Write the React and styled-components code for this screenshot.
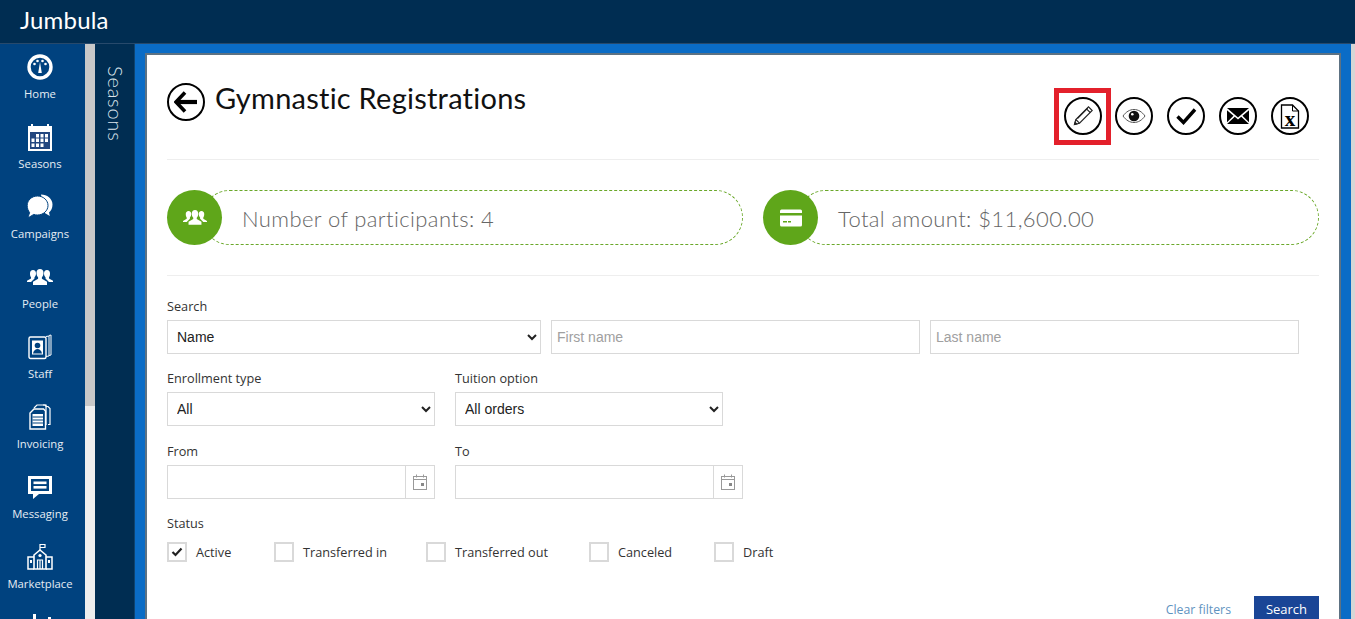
import React from "react";
import styled, { createGlobalStyle } from "styled-components";

const GlobalStyle = createGlobalStyle`
  html, body {
    margin: 0;
    padding: 0;
    height: 100%;
    overflow: hidden;
    background: #fff;
  }
  * {
    box-sizing: border-box;
  }
`;

const HomeIcon = () => (
  <svg width="28" height="28" viewBox="0 0 28 28">
    <circle cx="14" cy="14" r="11" fill="none" stroke="#fff" strokeWidth="3.4" />
    <circle cx="8.5" cy="11" r="1.3" fill="#fff" />
    <circle cx="11.5" cy="8" r="1.3" fill="#fff" />
    <circle cx="16.5" cy="8" r="1.3" fill="#fff" />
    <circle cx="19.5" cy="11" r="1.3" fill="#fff" />
    <path d="M14 9l1.8 11h-3.6z" fill="#fff" />
  </svg>
);

const SeasonsIcon = () => (
  <svg width="24" height="28" viewBox="0 0 24 28">
    <path d="M0 3h3V1h2v2h14V1h2v2h3v25H0z" fill="#fff" />
    <rect x="2" y="9" width="20" height="17" fill="#23477f" />
    <g fill="#fff">
      <rect x="8" y="11" width="3" height="3.500" />
      <rect x="12.500" y="11" width="3" height="3.500" />
      <rect x="17" y="11" width="3" height="3.500" />
      <rect x="3.500" y="15.500" width="3" height="3.500" />
      <rect x="8" y="15.500" width="3" height="3.500" />
      <rect x="12.500" y="15.500" width="3" height="3.500" />
      <rect x="17" y="15.500" width="3" height="3.500" />
      <rect x="3.500" y="20.500" width="3" height="3.500" />
      <rect x="8" y="20.500" width="3" height="3.500" />
      <rect x="12.500" y="20.500" width="3" height="3.500" />
    </g>
  </svg>
);

const CampaignsIcon = () => (
  <svg width="26" height="26" viewBox="0 0 26 26">
    <path d="M14 .5c6 0 11.500 4 11.500 10 0 3.500-1.300 6.200-3.500 8l.8 3.500-5-3z" fill="#fff" />
    <path
      d="M10.500 2c5.800 0 10.500 4.300 10.500 9.500S16.300 21 10.500 21c-1.300 0-2.600-.2-3.700-.6L.8 24l1.800-5.400C1.200 16.800.2 14.300.2 11.500.2 6.300 4.700 2 10.500 2z"
      fill="#fff"
      stroke="#00427f"
      strokeWidth="1"
    />
  </svg>
);

const PeopleIcon = ({ size = 26, color = "#fff" }) => (
  <svg width={size} height={size * 0.62} viewBox="0 0 26 16" fill={color}>
    <path d="M6 1c1.900 0 3 1.400 3 3.400 0 1.600-.7 3-1.500 3.800v1.300L4 13H0v-1.200l4-2.300V8.200C3.300 7.400 3 6 3 4.400 3 2.400 4.100 1 6 1z" />
    <path d="M20 1c1.900 0 3 1.400 3 3.400 0 1.600-.3 3-1 3.800v1.300l4 2.300V13h-4l-3.500-3.500V8.200C17.700 7.400 17 6 17 4.400 17 2.400 18.100 1 20 1z" />
    <path d="M13 0c2.200 0 3.500 1.600 3.500 3.900 0 1.900-.7 3.500-1.600 4.400v1.500l5.100 3V16H6v-3.200l5.100-3V8.300c-.9-.9-1.600-2.500-1.600-4.400C9.500 1.600 10.800 0 13 0z" />
  </svg>
);

const StaffIcon = () => (
  <svg width="24" height="26" viewBox="0 0 24 26">
    <path d="M18 2.500l3-.5v20l-3 .5M21 1.500l2-.5v20l-2 .5" fill="none" stroke="#fff" strokeWidth="1" />
    <rect x="1" y="3" width="17" height="21.500" rx="1.500" fill="#00427f" stroke="#fff" strokeWidth="1.400" />
    <rect x="4" y="6.500" width="11" height="14" fill="#fff" />
    <circle cx="9.500" cy="11.500" r="2.800" fill="#00427f" />
    <path d="M5 19.500c.5-3 2.500-4.500 4.500-4.500s4 1.500 4.500 4.500z" fill="#00427f" />
  </svg>
);

const InvoicingIcon = () => (
  <svg width="22" height="26" viewBox="0 0 22 26">
    <path d="M17 2.500h2l2 2v16h-2M14 1h2l2 2" fill="none" stroke="#fff" strokeWidth="1.200" />
    <path d="M5 4l3-3h9v20" fill="none" stroke="#fff" strokeWidth="1.200" />
    <path d="M5 5h9.500l2 2v18H1V9z" fill="#00427f" stroke="#fff" strokeWidth="1.400" />
    <rect x="3.500" y="10" width="10.500" height="12" fill="#fff" />
    <g fill="#00427f">
      <rect x="3.500" y="12.500" width="10.500" height="1" />
      <rect x="3.500" y="15.500" width="10.500" height="1" />
      <rect x="3.500" y="18.500" width="10.500" height="1" />
    </g>
  </svg>
);

const MessagingIcon = () => (
  <svg width="26" height="25" viewBox="0 0 26 25">
    <path d="M1 1h24v18H12l-6 5v-5H1z" fill="#fff" />
    <rect x="4" y="4" width="18" height="12" fill="#00427f" />
    <rect x="6.500" y="6.500" width="13" height="2.600" fill="#fff" />
    <rect x="6.500" y="11" width="13" height="2.600" fill="#fff" />
  </svg>
);

const MarketplaceIcon = () => (
  <svg width="26" height="26" viewBox="0 0 26 26">
    <path d="M13 0v6M13 .5h5v3h-5" fill="none" stroke="#fff" strokeWidth="1.200" />
    <path d="M13 6l6 5v14H7V11z" fill="none" stroke="#fff" strokeWidth="1.600" />
    <circle cx="13" cy="11.500" r="1.600" fill="#fff" />
    <path d="M10.500 25v-9h5v9M13 16v9" fill="none" stroke="#fff" strokeWidth="1.200" />
    <path d="M7 13H1v12h6M19 13h6v12h-6" fill="none" stroke="#fff" strokeWidth="1.500" />
    <path d="M3 16h2v3H3zM21 16h2v3h-2z" fill="#fff" />
  </svg>
);

const ReportsIcon = () => (
  <svg width="26" height="26" viewBox="0 0 26 26" fill="#fff">
    <rect x="6" y="0" width="3" height="26" />
    <rect x="21" y="3" width="3" height="23" />
  </svg>
);

const BackIcon = () => (
  <svg width="24" height="22" viewBox="0 0 24 22">
    <path d="M11 1.500L2 11l9 9.500" fill="none" stroke="#000" strokeWidth="3.600" />
    <path d="M3 11h20" stroke="#000" strokeWidth="4.200" />
  </svg>
);

const PencilIcon = () => (
  <svg width="24" height="24" viewBox="0 0 24 24" fill="none" stroke="#222" strokeWidth="1.100">
    <path d="M3.500 20.500l1.300-5L17.500 2.800l3.700 3.700L8.500 19.200z" />
    <path d="M4.800 15.500l3.700 3.700M15.500 4.800l3.700 3.700M6.500 14.500L16.800 4.200" />
    <path d="M3.500 20.500l.6-2.300 1.700 1.700z" fill="#222" />
  </svg>
);

const EyeIcon = () => (
  <svg width="24" height="16" viewBox="0 0 24 16">
    <path d="M1 8c3-4.200 6.800-6.500 11-6.500S20 3.800 23 8c-3 4.200-6.800 6.500-11 6.500S4 12.200 1 8z" fill="none" stroke="#555" strokeWidth="1" />
    <circle cx="12" cy="8" r="5.300" fill="#111" />
    <circle cx="10.300" cy="6.300" r="1.300" fill="#fff" />
  </svg>
);

const CheckIcon = () => (
  <svg width="22" height="18" viewBox="0 0 22 18">
    <path d="M2.500 9.500l6 6L20 2.500" fill="none" stroke="#000" strokeWidth="3.400" />
  </svg>
);

const MailIcon = () => (
  <svg width="24" height="18" viewBox="0 0 24 18">
    <path d="M1 1h22L12 10.500z" fill="#000" />
    <path d="M1 3.200v12l6.500-6.500zM23 3.200v12l-6.500-6.500z" fill="#000" />
    <path d="M1 17l7.800-7.300L12 12.500l3.200-2.800L23 17z" fill="#000" />
  </svg>
);

const ExcelIcon = () => (
  <svg width="20" height="25" viewBox="0 0 20 25">
    <path d="M1.500 1h11l6 6v17h-17z" fill="#fff" stroke="#000" strokeWidth="1.300" />
    <path d="M12.500 1v6h6" fill="none" stroke="#000" strokeWidth="1" />
    <text x="10" y="21.500" textAnchor="middle" fontFamily="Liberation Serif, serif" fontWeight="700" fontSize="21" fill="#000">x</text>
  </svg>
);

const CardIcon = () => (
  <svg width="24" height="20" viewBox="0 0 24 20">
    <rect x="1" y="1.500" width="22" height="17" rx="1.500" fill="#fff" />
    <rect x="1" y="5" width="22" height="2.500" fill="#5fa61a" />
    <rect x="3" y="10" width="18" height="6.500" fill="#fff" />
    <rect x="4" y="13" width="4" height="1.500" fill="#5fa61a" />
    <rect x="9" y="13" width="3" height="1.500" fill="#5fa61a" />
  </svg>
);

const CalendarIcon = () => (
  <svg width="14" height="16" viewBox="0 0 14 16" fill="none" stroke="#999" strokeWidth="1">
    <rect x=".5" y="2.500" width="13" height="13" />
    <path d="M.5 5.500h13M3.500 .5v3M10.500 .5v3" />
    <rect x="8" y="9" width="3" height="3" fill="#888" stroke="none" />
  </svg>
);

const navItems = [
  { label: "Home", Icon: HomeIcon },
  { label: "Seasons", Icon: SeasonsIcon },
  { label: "Campaigns", Icon: CampaignsIcon },
  { label: "People", Icon: PeopleIcon },
  { label: "Staff", Icon: StaffIcon },
  { label: "Invoicing", Icon: InvoicingIcon },
  { label: "Messaging", Icon: MessagingIcon },
  { label: "Marketplace", Icon: MarketplaceIcon },
  { label: "", Icon: ReportsIcon },
];

const statuses = [
  { label: "Active", width: 107, checked: true },
  { label: "Transferred in", width: 152 },
  { label: "Transferred out", width: 163 },
  { label: "Canceled", width: 125 },
  { label: "Draft", width: 70 },
];

export default function App() {
  return (
    <Page>
      <GlobalStyle />
      <TopBar>
        <Logo>Jumbula</Logo>
      </TopBar>
      <Body>
        <Sidebar>
          {navItems.map(({ label, Icon }, i) => (
            <NavItem key={i}>
              <NavIcon>
                <Icon />
              </NavIcon>
              <NavLabel>{label}</NavLabel>
            </NavItem>
          ))}
        </Sidebar>
        <SideScroll>
          <SideThumb />
        </SideScroll>
        <Rail>
          <RailTitle>Seasons</RailTitle>
        </Rail>
        <Content>
          <Panel>
            <Header>
              <TitleGroup>
                <BackButton>
                  <BackIcon />
                </BackButton>
                <Title>Gymnastic Registrations</Title>
              </TitleGroup>
              <Actions>
                <ActionButton>
                  <PencilIcon />
                  <Highlight />
                </ActionButton>
                <ActionButton>
                  <EyeIcon />
                </ActionButton>
                <ActionButton>
                  <CheckIcon />
                </ActionButton>
                <ActionButton>
                  <MailIcon />
                </ActionButton>
                <ActionButton>
                  <ExcelIcon />
                </ActionButton>
              </Actions>
            </Header>

            <Stats>
              <Stat $width={576}>
                <StatIcon>
                  <PeopleIcon size={24} />
                </StatIcon>
                <StatPill>Number of participants: 4</StatPill>
              </Stat>
              <Stat $width={556}>
                <StatIcon>
                  <CardIcon />
                </StatIcon>
                <StatPill>Total amount: $11,600.00</StatPill>
              </Stat>
            </Stats>

            <Filters>
              <FilterRow $gap={10}>
                <Field $width={374}>
                  <FieldLabel>Search</FieldLabel>
                  <Select defaultValue="Name">
                    <option>Name</option>
                  </Select>
                </Field>
                <Field $width={369}>
                  <FieldLabel>&nbsp;</FieldLabel>
                  <TextInput placeholder="First name" />
                </Field>
                <Field $width={369}>
                  <FieldLabel>&nbsp;</FieldLabel>
                  <TextInput placeholder="Last name" />
                </Field>
              </FilterRow>
              <FilterRow $gap={20}>
                <Field $width={268}>
                  <FieldLabel>Enrollment type</FieldLabel>
                  <Select defaultValue="All">
                    <option>All</option>
                  </Select>
                </Field>
                <Field $width={268}>
                  <FieldLabel>Tuition option</FieldLabel>
                  <Select defaultValue="All orders">
                    <option>All orders</option>
                  </Select>
                </Field>
              </FilterRow>
              <FilterRow $gap={20} $top={1}>
                <Field $width={268}>
                  <FieldLabel>From</FieldLabel>
                  <DateBox>
                    <DateInput />
                    <DateAddon>
                      <CalendarIcon />
                    </DateAddon>
                  </DateBox>
                </Field>
                <Field $width={288}>
                  <FieldLabel>To</FieldLabel>
                  <DateBox>
                    <DateInput />
                    <DateAddon>
                      <CalendarIcon />
                    </DateAddon>
                  </DateBox>
                </Field>
              </FilterRow>
              <div>
                <StatusLabel>Status</StatusLabel>
                <StatusRow>
                  {statuses.map((s) => (
                    <StatusOption key={s.label} $width={s.width}>
                      <CheckBox>
                        {s.checked && (
                          <svg width="12" height="10" viewBox="0 0 12 10">
                            <path d="M1.500 5l3 3 6-6.500" fill="none" stroke="#222" strokeWidth="2.200" />
                          </svg>
                        )}
                      </CheckBox>
                      {s.label}
                    </StatusOption>
                  ))}
                </StatusRow>
              </div>
            </Filters>

            <FormActions>
              <ClearLink>Clear filters</ClearLink>
              <SearchButton>Search</SearchButton>
            </FormActions>
          </Panel>
        </Content>
        <PageScroll />
      </Body>
    </Page>
  );
}

const Page = styled.div`
  height: 619px;
  display: flex;
  flex-direction: column;
  overflow: hidden;
  font-family: "Open Sans", "Noto Sans", sans-serif;
  color: #333;
`;

const TopBar = styled.header`
  height: 44px;
  flex: none;
  display: flex;
  align-items: center;
  padding: 0 0 5px 20px;
  background: #002d52;
  border-bottom: 1px solid #27496b;
`;

const Logo = styled.div`
  font-family: "Lato", sans-serif;
  font-size: 24px;
  font-weight: 400;
  letter-spacing: 0.2px;
  color: #fff;
`;

const Body = styled.div`
  flex: 1;
  min-height: 0;
  display: flex;
  overflow: hidden;
`;

const Sidebar = styled.nav`
  width: 85px;
  flex: none;
  display: flex;
  flex-direction: column;
  padding-right: 5px;
  background: #00427f;
  overflow: hidden;
`;

const NavItem = styled.div`
  height: 70px;
  flex: none;
  display: flex;
  flex-direction: column;
  align-items: center;
  padding-top: 9px;
`;

const NavIcon = styled.div`
  height: 28px;
  display: flex;
  align-items: center;
  justify-content: center;
`;

const NavLabel = styled.div`
  margin-top: 4px;
  font-size: 11.300px;
  line-height: 18px;
  white-space: nowrap;
  color: #e6edf4;
`;

const SideScroll = styled.div`
  width: 10px;
  flex: none;
  background: #eeeeee;
`;

const SideThumb = styled.div`
  height: 362px;
  background: #c8c8c8;
`;

const Rail = styled.aside`
  width: 40px;
  flex: none;
  padding: 22px 0 0 2px;
  display: flex;
  justify-content: center;
  background: #002d52;
  border-right: 1px solid #0f4470;
`;

const RailTitle = styled.div`
  writing-mode: vertical-rl;
  font-family: "Lato", sans-serif;
  font-size: 20px;
  font-weight: 300;
  line-height: 24px;
  letter-spacing: 0.8px;
  color: #dde5ec;
`;

const Content = styled.main`
  flex: 1;
  min-width: 0;
  padding: 9px 10px 0 10px;
  background: #0a6cc6;
`;

const Panel = styled.section`
  height: 640px;
  padding: 0 20px;
  background: #fff;
  border: 2px solid #5d7283;
  border-bottom: none;
`;

const Header = styled.div`
  height: 105px;
  display: flex;
  justify-content: space-between;
  border-bottom: 1px solid #eeeeee;
`;

const TitleGroup = styled.div`
  display: flex;
  align-items: flex-start;
  gap: 10px;
  padding-top: 28px;
`;

const BackButton = styled.button`
  width: 38px;
  height: 38px;
  padding: 0;
  display: flex;
  align-items: center;
  justify-content: center;
  background: #fff;
  border: 2px solid #000;
  border-radius: 50%;
`;

const Title = styled.h1`
  margin: -2px 0 0;
  font-family: "Lato", sans-serif;
  font-size: 29px;
  font-weight: 400;
  line-height: 34px;
  letter-spacing: 0.24px;
  color: #111;
`;

const Actions = styled.div`
  display: flex;
  align-items: flex-start;
  gap: 14px;
  padding: 42px 10px 0 0;
`;

const ActionButton = styled.button`
  position: relative;
  width: 38px;
  height: 38px;
  padding: 0;
  display: flex;
  align-items: center;
  justify-content: center;
  background: #fff;
  border: 2px solid #000;
  border-radius: 50%;

  &:first-child {
    margin: 0 -1px 0 1px;
  }
`;

const Highlight = styled.span`
  position: absolute;
  left: -12px;
  top: -11px;
  width: 57px;
  height: 57px;
  border: 5px solid #e3202b;
`;

const Stats = styled.div`
  display: flex;
  gap: 20px;
  height: 116px;
  padding: 30px 0;
  border-bottom: 1px solid #eeeeee;
`;

const Stat = styled.div`
  width: ${(p) => p.$width}px;
  height: 55px;
  display: flex;
`;

const StatIcon = styled.div`
  position: relative;
  z-index: 1;
  width: 55px;
  height: 55px;
  flex: none;
  display: flex;
  align-items: center;
  justify-content: center;
  border-radius: 50%;
  background: #5fa61a;
`;

const StatPill = styled.div`
  flex: 1;
  margin-left: -20px;
  padding: 2px 0 0 39px;
  display: flex;
  align-items: center;
  font-family: "Lato", sans-serif;
  font-size: 22px;
  font-weight: 300;
  letter-spacing: 0.4px;
  color: #666;
  border: 1px dashed #6aa82a;
  border-radius: 28px;
`;

const Filters = styled.div`
  display: flex;
  flex-direction: column;
  gap: 15px;
  padding-top: 21px;
`;

const FilterRow = styled.div`
  display: flex;
  gap: ${(p) => p.$gap}px;
  margin-top: ${(p) => p.$top || 0}px;
`;

const Field = styled.div`
  width: ${(p) => p.$width}px;
`;

const FieldLabel = styled.div`
  height: 19px;
  margin-bottom: 4px;
  font-size: 12.700px;
  line-height: 19px;
  color: #333;
`;

const StatusLabel = styled(FieldLabel)`
  margin-bottom: 9px;
`;

const Select = styled.select`
  display: block;
  width: 100%;
  height: 34px;
  padding: 0 5px;
  font-family: "Liberation Sans", Arial, sans-serif;
  font-size: 14px;
  color: #222;
  background: #fff;
  border: 1px solid #d9d9d9;
  border-radius: 0;
  outline: none;
`;

const TextInput = styled.input`
  display: block;
  width: 100%;
  height: 34px;
  padding: 0 5px;
  font-family: "Liberation Sans", Arial, sans-serif;
  font-size: 14px;
  color: #222;
  background: #fff;
  border: 1px solid #d9d9d9;
  border-radius: 0;
  outline: none;

  &::placeholder {
    color: #a0a0a0;
    opacity: 1;
  }
`;

const DateBox = styled.div`
  height: 34px;
  display: flex;
  border: 1px solid #d9d9d9;
`;

const DateInput = styled.input`
  flex: 1;
  min-width: 0;
  border: none;
  outline: none;
  background: #fff;
`;

const DateAddon = styled.div`
  width: 29px;
  flex: none;
  display: flex;
  align-items: center;
  justify-content: center;
  border-left: 1px solid #d9d9d9;
`;

const StatusRow = styled.div`
  display: flex;
`;

const StatusOption = styled.label`
  width: ${(p) => p.$width}px;
  flex: none;
  display: flex;
  align-items: center;
  gap: 9px;
  font-size: 12.700px;
  line-height: 20px;
  color: #333;
`;

const CheckBox = styled.span`
  width: 20px;
  height: 20px;
  flex: none;
  display: flex;
  align-items: center;
  justify-content: center;
  border: 2px solid #d9d9d9;
  background: #fff;
`;

const FormActions = styled.div`
  display: flex;
  justify-content: flex-end;
  align-items: center;
  gap: 23px;
  margin-top: 34px;
`;

const ClearLink = styled.a`
  font-size: 12.300px;
  color: #5f93bf;
`;

const SearchButton = styled.button`
  width: 65px;
  height: 26px;
  padding: 0;
  font-family: "Open Sans", sans-serif;
  font-size: 13px;
  color: #fff;
  background: #1a4596;
  border: none;
`;

const PageScroll = styled.div`
  width: 4px;
  flex: none;
  background: #d6d6d6;
`;
